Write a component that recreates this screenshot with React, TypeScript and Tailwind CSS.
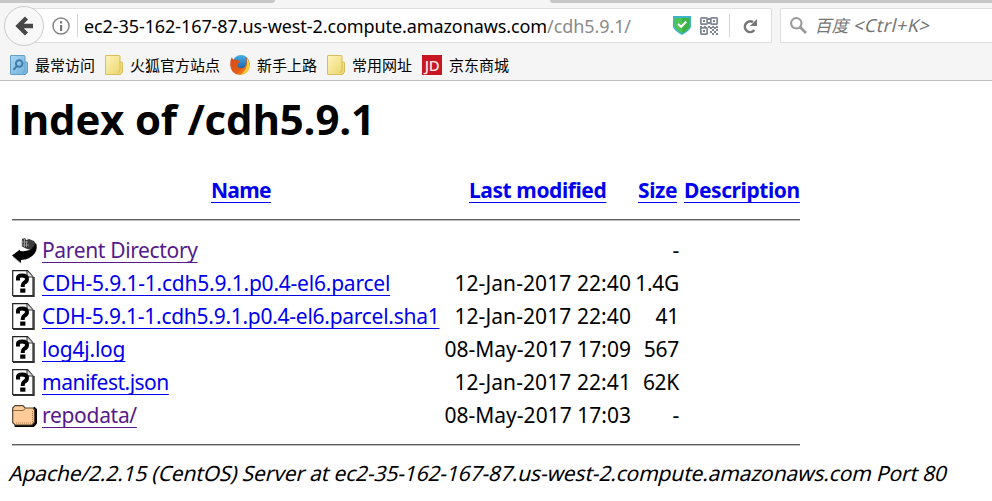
import React from 'react';

const InfoIcon = () => (
  <svg width="18" height="18" viewBox="0 0 18 18" fill="none" className="shrink-0">
    <circle cx="9" cy="9" r="8" stroke="#858585" strokeWidth="1.5" />
    <rect x="8" y="4.2" width="2.2" height="2.3" fill="#777" />
    <rect x="8" y="8" width="2.2" height="6" fill="#777" />
  </svg>
);

const ShieldIcon = () => (
  <svg width="18" height="19" viewBox="0 0 18 19" className="shrink-0">
    <path d="M0 0H18V11Q17 14.500 9 19Q1 14.500 0 11Z" fill="#3fb3cc" />
    <path d="M1.500 2H16.500V10.500Q15.500 13.500 9 17.300Q2.500 13.500 1.500 10.500Z" fill="#4cc552" />
    <path d="M9 2H16.500V10.500Q15.500 13.500 9 17.300Z" fill="#3db345" />
    <path d="M5 8L8.200 10.800L13.200 5.500" fill="none" stroke="#fff" strokeWidth="2.200" />
  </svg>
);

const QR_DOTS = [
  [10, 10], [14, 10], [12, 12], [16, 12], [10, 14], [14, 14], [12, 16], [16, 16],
  [0, 9], [4, 9], [8, 9], [8, 1], [8, 5], [12, 9], [16, 9],
];

const QrIcon = () => (
  <svg width="18" height="18" viewBox="0 0 18 18" className="shrink-0" fill="#7d8794">
    <g fill="none" stroke="#7d8794" strokeWidth="1.700">
      <rect x=".85" y=".85" width="6.300" height="6.300" rx="1" />
      <rect x="10.850" y=".85" width="6.300" height="6.300" rx="1" />
      <rect x=".85" y="10.850" width="6.300" height="6.300" rx="1" />
    </g>
    <rect x="3" y="3" width="2" height="2" />
    <rect x="13" y="3" width="2" height="2" />
    <rect x="3" y="13" width="2" height="2" />
    {QR_DOTS.map(([x, y]) => (
      <rect key={`${x}-${y}`} x={x} y={y} width="2" height="2" />
    ))}
  </svg>
);

const ReloadIcon = () => (
  <svg width="16" height="16" viewBox="0 0 16 16" className="shrink-0">
    <path d="M11 4.200A5.300 5.300 0 1 0 12.300 12" fill="none" stroke="#777" strokeWidth="2.600" />
    <path d="M15 1V8H8Z" fill="#777" />
  </svg>
);

const SearchIcon = () => (
  <svg width="17" height="17" viewBox="0 0 17 17" fill="none" stroke="#999" className="shrink-0">
    <circle cx="6.300" cy="6.300" r="5.200" strokeWidth="2" />
    <path d="M10 10L16 16" strokeWidth="2.600" />
  </svg>
);

const FolderShape = ({ blue = false }: { blue?: boolean }) => (
  <svg width="18" height="20" viewBox="0 0 18 20" className="shrink-0">
    <defs>
      <linearGradient id={blue ? 'blueFolder' : 'yellowFolder'} x1="0" y1="0" x2="1" y2="1">
        <stop offset="0" stopColor={blue ? '#a9d6f1' : '#fdf4ba'} />
        <stop offset="1" stopColor={blue ? '#72b1dc' : '#ecd469'} />
      </linearGradient>
    </defs>
    <path
      d="M1 .5H14Q15 .5 15 1.500V7H16.500Q17.500 7 17.500 8V17L15.500 19.500H1Q.5 19.500 .5 19V1Q.5 .5 1 .5Z"
      fill={blue ? 'url(#blueFolder)' : 'url(#yellowFolder)'}
      stroke={blue ? '#639fc8' : '#d9bd58'}
    />
    <path d="M15 7V15L13 18" fill="none" stroke={blue ? '#68a5cf' : '#d6bd5f'} />
    {blue && (
      <g fill="none" stroke="#3d79aa" strokeWidth="1.900">
        <circle cx="9.200" cy="8.500" r="3.300" />
        <path d="M7 11L3.500 14.800" />
      </g>
    )}
  </svg>
);

const FirefoxIcon = () => (
  <svg width="20" height="20" viewBox="0 0 20 20" className="shrink-0">
    <defs>
      <linearGradient id="fox" x1="0" y1="0" x2="1" y2="1">
        <stop offset="0" stopColor="#d9481c" />
        <stop offset=".6" stopColor="#e45b15" />
        <stop offset="1" stopColor="#ffc52e" />
      </linearGradient>
      <linearGradient id="globe" x1="0" y1="0" x2="0" y2="1">
        <stop offset="0" stopColor="#43b3e8" />
        <stop offset="1" stopColor="#1b4d99" />
      </linearGradient>
    </defs>
    <circle cx="11" cy="8.500" r="8.500" fill="url(#globe)" />
    <path
      d="M1.500 2.500L4 5Q6 4 8 5L10 7L7.500 9Q7 12 10 13Q14 14 16 10Q17.500 6 15.500 2Q19.500 5 19.800 10Q19.500 19 10 20Q1 19.500 .2 10Q0 6 1.500 2.500Z"
      fill="url(#fox)"
    />
    <path d="M17 3Q20 7 19.500 11Q18 18 12 19Q18 14 17 3Z" fill="#ffd23c" />
  </svg>
);

const JdIcon = () => (
  <span className="flex h-5 w-5 shrink-0 items-center justify-center bg-[#c81623] font-['Noto_Sans',sans-serif] text-[15px] leading-none font-medium tracking-[-0.3px] text-[#fbe9ea]">
    JD
  </span>
);

const BackHandIcon = () => (
  <svg width="25" height="26" viewBox="0 0 25 26">
    <path d="M10 1L13 0L14 2L17 1L22 3L24 6V9L20 12L15 11L10 8.500Z" fill="#3c3c3c" />
    <path d="M10 2V8.500M12.500 1V9M14.500 3V9M10 4H16M11 7H17" stroke="#a5a5a5" strokeWidth=".8" />
    <path d="M0 17.500L8 11.500V13Q18 14 21.500 8.500L24 5Q25.500 9 24 13Q20 21.500 9 22V25Z" fill="#000" />
    <path d="M1 18.800L8.300 24.800" stroke="#888" strokeWidth=".8" fill="none" />
  </svg>
);

const UnknownIcon = () => (
  <svg width="23" height="27" viewBox="0 0 23 27">
    <path d="M.7 .7H15.500L21 7V25.500H.7Z" fill="#fff" stroke="#222" strokeWidth="1.200" />
    <path d="M22 7V26.300H1" fill="none" stroke="#333" strokeWidth="1.500" />
    <path d="M15 1V7H21" fill="#ddd" stroke="#333" strokeWidth="1.100" />
    <path
      d="M6 10.500V8Q6 5.500 10 5.500Q15 5.500 15 9Q15 11.300 12.300 12.700Q10.800 13.500 10.700 17"
      fill="none"
      stroke="#000"
      strokeWidth="4"
    />
    <rect x="8.200" y="18.500" width="5.200" height="4.200" fill="#000" />
  </svg>
);

const DirectoryIcon = () => (
  <svg width="25" height="22" viewBox="0 0 25 22">
    <path d="M3 21.500H22L24.500 18.500V4L22 2V19H3Z" fill="#000" stroke="#000" />
    <path d="M.7 3L3 .7H11L13 3H21L22.500 5V17L20 20H3L.7 17.500Z" fill="#ffcc99" stroke="#57432f" strokeWidth="1.200" />
    <path d="M1 5.500H11L13.500 3.500" fill="none" stroke="#936b43" />
    <path d="M4 18H19M20.500 6V17" fill="none" stroke="#a77543" strokeDasharray="1 1" />
  </svg>
);

type Row = {
  icon: React.ReactNode;
  name: string;
  tone: string;
  modified?: string;
  dateTracking?: string;
  size: string;
};

const BLUE = 'text-[#0000ee]';
const VISITED = 'text-[#551a8b]';

const ROWS: Row[] = [
  { icon: <BackHandIcon />, name: 'Parent Directory', tone: `${VISITED} tracking-[-0.35px]`, size: '-' },
  { icon: <UnknownIcon />, name: 'CDH-5.9.1-1.cdh5.9.1.p0.4-el6.parcel', tone: `${BLUE} tracking-[-0.22px]`, modified: '12-Jan-2017 22:40', dateTracking: 'tracking-[0.08px]', size: '1.4G' },
  { icon: <UnknownIcon />, name: 'CDH-5.9.1-1.cdh5.9.1.p0.4-el6.parcel.sha1', tone: `${BLUE} tracking-[-0.27px]`, modified: '12-Jan-2017 22:40', dateTracking: 'tracking-[0.08px]', size: '41' },
  { icon: <UnknownIcon />, name: 'log4j.log', tone: `${BLUE} tracking-[-0.2px]`, modified: '08-May-2017 17:09', dateTracking: 'tracking-[0.02px]', size: '567' },
  { icon: <UnknownIcon />, name: 'manifest.json', tone: `${BLUE} tracking-[-0.5px]`, modified: '12-Jan-2017 22:41', dateTracking: 'tracking-[0.08px]', size: '62K' },
  { icon: <DirectoryIcon />, name: 'repodata/', tone: `${VISITED} tracking-[-0.3px]`, modified: '08-May-2017 17:03', dateTracking: 'tracking-[0.02px]', size: '-' },
];

const LINK = 'underline decoration-1 underline-offset-[4px] [text-decoration-skip-ink:none]';

const Rule = () => <div className="ml-3 h-0.5 w-[788px] border-t border-b border-t-[#5f5f5f] border-b-[#bdbdbd]" />;

const BookmarkItem = ({ icon, label }: { icon: React.ReactNode; label: string }) => (
  <div className="flex shrink-0 items-center gap-[7px]">
    {icon}
    <span>{label}</span>
  </div>
);

export default function App() {
  return (
    <div className="flex h-[501px] w-[992px] flex-col overflow-hidden bg-white font-['Noto_Sans','Noto_Sans_CJK_SC',sans-serif] whitespace-nowrap text-black">
      <header className="h-[81px] shrink-0 border-b border-[#bebebe] bg-[#f5f5f5]">
        <div className="flex h-[3px] justify-between">
          <div className="w-[275px] rounded-br-[6px] bg-[#c6c6c6]" />
          <div className="w-[442px] rounded-bl-[6px] bg-[#c6c6c6]" />
        </div>
        <div className="flex h-[42px] items-center pt-[3px] pl-1">
          <div className="z-10 flex h-10 w-10 shrink-0 items-center justify-center rounded-full border border-[#cbcbcb] bg-[#f8f8f8]">
            <svg width="19" height="20" viewBox="0 0 19 20">
              <path d="M11.500 2L3.500 10L11.500 18M4 10H18" fill="none" stroke="#474747" strokeWidth="4.400" />
            </svg>
          </div>
          <div className="-ml-4 flex h-[35px] w-[744px] shrink-0 items-center rounded-r-[2px] border border-[#dedede] bg-white pl-[23px]">
            <InfoIcon />
            <div className="ml-[7px] h-[23px] w-px bg-[#d5d5d5]" />
            <div className="ml-[6px] w-[589px] text-[18px] leading-6 tracking-[-0.09px]">
              ec2-35-162-167-87.us-west-2.compute.amazonaws.com<span className="text-[#8a8a8a]">/cdh5.9.1/</span>
            </div>
            <ShieldIcon />
            <div className="w-[9px] shrink-0" />
            <QrIcon />
            <div className="mr-3 ml-[11px] h-[23px] w-px shrink-0 bg-[#d5d5d5]" />
            <ReloadIcon />
          </div>
          <div className="ml-2 flex h-[35px] w-[220px] shrink-0 items-center rounded-l-[2px] border border-r-0 border-[#dedede] bg-white pl-[9px]">
            <SearchIcon />
            <span className="ml-[9px] inline-block skew-x-[-14deg] text-[17px] leading-6 text-[#757575]">
              百度 <span className="text-[18px] tracking-[0.55px]">&lt;Ctrl+K&gt;</span>
            </span>
          </div>
        </div>
        <nav className="flex h-[35px] items-center gap-[10px] pt-[5px] pl-[10px] text-[15px] leading-5">
          <BookmarkItem icon={<FolderShape blue />} label="最常访问" />
          <BookmarkItem icon={<FolderShape />} label="火狐官方站点" />
          <BookmarkItem icon={<FirefoxIcon />} label="新手上路" />
          <BookmarkItem icon={<FolderShape />} label="常用网址" />
          <BookmarkItem icon={<JdIcon />} label="京东商城" />
        </nav>
      </header>

      <main className="text-[21px] leading-[33px]">
        <h1 className="flex h-[93px] pt-[9px] pl-2 font-['Open_Sans',sans-serif] text-[42px] leading-[58px] font-bold tracking-[-0.2px]">
          Index of /cdh5.9.1
        </h1>
        <div className={`flex h-[45px] font-bold tracking-[-0.42px] ${BLUE}`}>
          <div className="w-[439px] pl-[211px]"><a className={`${LINK} tracking-[-0.7px]`}>Name</a></div>
          <div className="w-[192px] pl-[30px]"><a className={LINK}>Last modified</a></div>
          <div className="w-[53px] pl-[7px]"><a className={LINK}>Size</a></div>
          <div><a className={LINK}>Description</a></div>
        </div>
        <Rule />
        <div className="h-[13px]" />
        {ROWS.map((row) => (
          <div key={row.name} className="flex h-[33px]">
            <div className="flex w-[42px] items-center pl-3">{row.icon}</div>
            <div className="w-[389px]"><a className={`${LINK} ${row.tone}`}>{row.name}</a></div>
            <div className={`w-[200px] text-right ${row.dateTracking ?? ''}`}>{row.modified}</div>
            <div className="w-[48px] text-right tracking-[-0.3px]">{row.size}</div>
          </div>
        ))}
        <div className="h-[12px]" />
        <Rule />
        <address className="pt-[11px] pl-[10px] not-italic">
          <span className="inline-block skew-x-[-14deg] text-[21px] tracking-[-0.17px]">
            Apache/2.2.15 (CentOS) Server at ec2-35-162-167-87.us-west-2.compute.amazonaws.com Port 80
          </span>
        </address>
      </main>
    </div>
  );
}
